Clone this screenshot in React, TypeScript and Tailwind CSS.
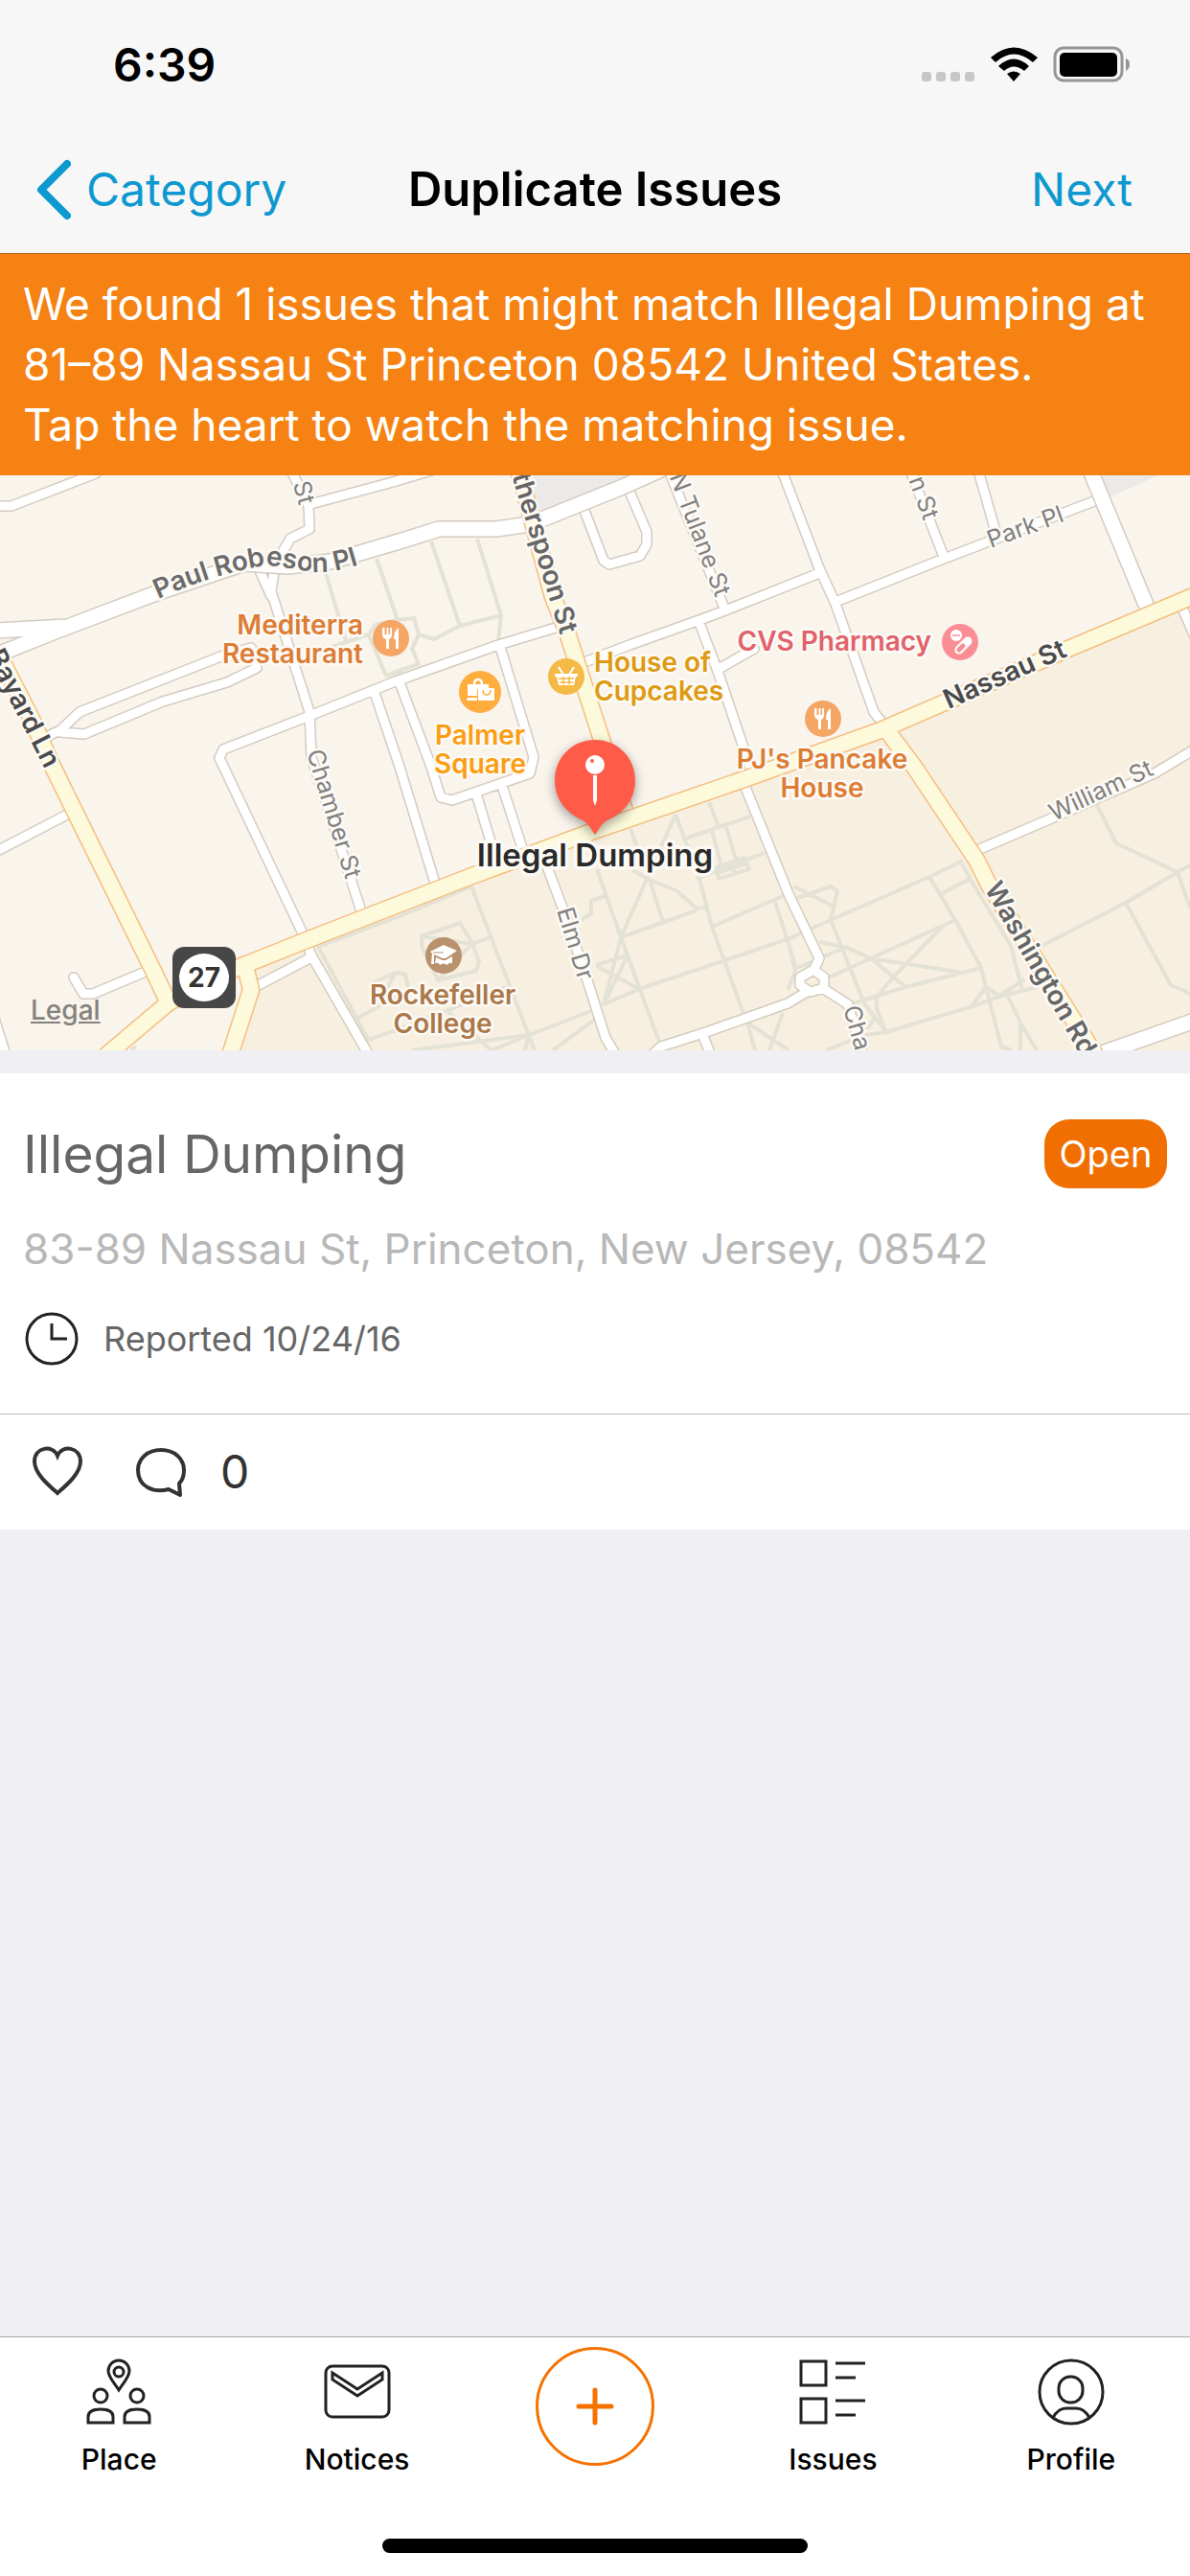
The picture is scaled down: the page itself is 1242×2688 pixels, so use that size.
import { useState, type ReactNode } from "react";

type Tab = {
  label: string;
  icon: ReactNode;
};

const CASING = "#d5cbc0";
const HIGHWAY_CASING = "#f6be80";

const FOOTPATHS = [
  "M340 102L362 176M393 87L415 151L432 149L437 166L453 171L480 157L523 146",
  "M347 179L385 166L392 156L415 151M450 69L480 157M498 66L523 146L520 174",
  "M437 166L430 181L437 197L410 206M385 167L403 209L420 204",
  "M385 590L332 492L420 459L492 429L558 600",
  "M372 567L413 544M385 589L420 576M388 530L413 519L402 538",
  "M440 481L480 467L492 487L500 507L497 517L457 527L440 491Z",
  "M440 481L492 489L513 482M457 527L492 489M410 521L417 519L423 521L427 537",
  "M430 600L552 584L617 559M577 600L623 566M548 600L552 584M467 559L513 600L552 584M410 581L533 532",
  "M658 369L667 394M623 411L648 482L688 591M705 354L648 482L630 552M705 354L730 421L743 471L777 564",
  "M660 412L678 422L707 434L727 452L737 451M678 422L692 466M648 482L727 454",
  "M623 512L667 536M622 511L655 501L630 552L667 536L757 506L830 481",
  "M632 439L617 444L617 457L607 464M743 471L817 439M808 442L830 511",
  "M715 379L783 356M740 341L750 367M743 371L753 407M758 367L768 401M727 421L798 394",
  "M748 409L777 399L782 411L750 421ZM749 415L779 405M763 404L767 416",
  "M780 571L823 600M780 571L788 600M817 561L803 600",
  "M822 484L867 464L970 419L1005 402M829 429L872 451M832 441L867 429L874 434L867 464L879 494L902 551L925 581",
  "M855 487L882 492L909 504L945 534M909 504L1005 519M865 524L909 504L997 464",
  "M985 469L932 524L915 544L915 557L925 581M970 419L997 464L1024 514L1029 534L1045 596L1056 600",
  "M890 551L945 534L1024 514M862 600L902 584L925 581L1015 554L1042 544L1082 534",
  "M1029 534L1044 544M1029 534L1014 554M1042 544L1069 526M1052 544L1065 571L1082 600M1065 571V600",
  "M1004 406L1022 437L1055 491L1067 537M982 437L1012 421",
  "M1085 492L1175 446L1229 414L1242 407M1145 344L1165 384L1229 414L1242 451M1175 446L1222 532L1239 539L1242 542",
  "M822 484L830 517L822 537M832 514L879 494M902 551L913 566L905 578M137 600L142 596",
];

const STREETS = [
  "M-5 32H12L100 -2",
  "M304 -5L322 32L323 56L303 66L287 94L283 121L323 247L325 294L377 455",
  "M324 30L410 7L450 -5",
  "M270 97L283 126",
  "M50 272L63 266L83 247L233 188L262 180L268 201L237 216L170 236L88 270L63 268",
  "M580 159L520 177L410 216L323 251L233 286L229 295L315 476L325 501L385 605",
  "M390 224L417 304L453 422",
  "M417 216L450 304L460 336L472 339L553 311L557 294L522 179",
  "M497 332L515 392M525 327L546 392M566 395L587 451L613 527L632 587L643 605",
  "M-5 393L70 354M77 524L87 541H97L154 517M-8 560L6 605M266 534L323 504",
  "M607 29L630 89L636 93L668 84L675 72V59L655 12",
  "M698 -5L757 141M610 195L657 177L730 151L757 141L830 112L855 102",
  "M730 154L750 207L783 305M750 202L787 181",
  "M816 -5L855 97L872 134L912 247L924 262",
  "M872 132L985 87L1142 27M950 -5L985 85M1021 -5L1040 62",
  "M1232 134L1250 175M1018 392L1095 359L1205 311L1250 284",
  "M775 318L823 437L855 504L849 517",
  "M849 516L860 524V535L846 539L835 532V524ZM842 539L822 551L737 581L690 596L680 605M733 583L742 605",
  "M860 536L885 552L900 605",
];

const AVENUES = [
  "M-5 188L60 162L163 123L255 92L300 95L345 90L420 68L458 56H518L553 51L650 12L690 -6",
  "M-5 162L70 158",
  "M1138 -5L1199 142",
  "M1150 603L1250 568",
];

const HIGHWAYS = [
  "M110 606L175 551L215 527L315 487L410 450L490 419L617 372L777 317L919 266L1115 181L1250 124",
  "M-4 182L33 254L55 304L160 517L178 555",
  "M255 508L262 537L240 605",
  "M541 -6L577 127L592 164L628 276L652 350",
  "M927 268L954 304L1019 401L1032 427L1122 571L1144 606",
];

function Roads({ lines, outer, inner }: { lines: string[]; outer: number; inner: number }) {
  const d = lines.join("");
  return (
    <g fill="none" strokeLinejoin="round" strokeLinecap="round">
      <path d={d} stroke={CASING} strokeWidth={outer} />
      <path d={d} stroke="#fff" strokeWidth={inner} />
    </g>
  );
}

function StreetName({
  x,
  y,
  angle,
  anchor = "start",
  tone = "#808080",
  major = false,
  children,
}: {
  x: number;
  y: number;
  angle: number;
  anchor?: "start" | "end";
  tone?: string;
  major?: boolean;
  children: string;
}) {
  return (
    <text
      transform={`translate(${x} ${y}) rotate(${angle})`}
      textAnchor={anchor}
      fill={tone}
      fontWeight={major ? 600 : 400}
      fontSize={major ? 28 : 25}
    >
      {children}
    </text>
  );
}

function PlaceName({
  x,
  y,
  color,
  anchor = "middle",
  lines,
}: {
  x: number;
  y: number;
  color: string;
  anchor?: "start" | "middle" | "end";
  lines: string[];
}) {
  return (
    <text textAnchor={anchor} fill={color} fontWeight={600} fontSize={28}>
      {lines.map((line, i) => (
        <tspan key={line} x={x} y={y + i * 30}>
          {line}
        </tspan>
      ))}
    </text>
  );
}

function ForkKnife({ x, y }: { x: number; y: number }) {
  return (
    <g transform={`translate(${x} ${y})`}>
      <circle r="19" fill="#f5a564" />
      <path
        d="M-9 -11V-4Q-9 0 -5 1V11H-2V1Q1 0 1 -4V-11H-1V-4H-2.500V-11H-4.500V-4H-6.500V-11ZM8 -11Q3 -8 3 1H5V11H8Z"
        fill="#fff"
      />
    </g>
  );
}

function MapView() {
  return (
    <section aria-label="Map" className="relative bg-[#f9f4ec]">
      <svg
        viewBox="0 0 1242 600"
        className="block h-auto w-full"
        fontFamily="Inter, 'Liberation Sans', sans-serif"
        role="img"
        aria-label="Map of Princeton around Nassau St"
      >
        <rect width="1242" height="600" fill="#f9f4ec" />
        <path d="M257 512L490 419L919 266L1242 127V600H240L262 537Z" fill="#f7efe0" />
        <path d="M548 0H690L562 42ZM1148 0H1209L1160 22Z" fill="#ebeae8" />
        <path d={FOOTPATHS.join("")} fill="none" stroke="#e3e2d5" strokeWidth="4" strokeLinejoin="round" />

        <Roads lines={STREETS} outer={12} inner={9} />
        <Roads lines={AVENUES} outer={18} inner={15} />
        <g fill="none" strokeLinejoin="round">
          <path d={HIGHWAYS.join("")} stroke={HIGHWAY_CASING} strokeWidth="19" />
          <path d={HIGHWAYS.join("")} stroke="#fcfadb" strokeWidth="16" />
        </g>

        <g stroke="#fdfaf5" strokeWidth="5" strokeLinejoin="round" paintOrder="stroke">
          <path id="robeson" d="M165 129Q205 111 240 102T283 94T320 100T400 84" fill="none" stroke="none" />
          <text fill="#6b6b6b" fontWeight={600} fontSize={28}>
            <textPath href="#robeson">Paul Robeson Pl</textPath>
          </text>
          <StreetName x={47} y={307} angle={63} anchor="end" tone="#4a4a4a" major>Bayard Ln</StreetName>
          <StreetName x={585} y={167} angle={73} anchor="end" tone="#666" major>therspoon St</StreetName>
          <StreetName x={990} y={244} angle={-24} tone="#4a4a4a" major>Nassau St</StreetName>
          <StreetName x={1027} y={431} angle={60} tone="#666" major>Washington Rd</StreetName>
          <StreetName x={312} y={32} angle={75} anchor="end">St</StreetName>
          <StreetName x={747} y={128} angle={69} anchor="end">N Tulane St</StreetName>
          <StreetName x={964} y={48} angle={70} anchor="end">n St</StreetName>
          <StreetName x={1034} y={76} angle={-20}>Park Pl</StreetName>
          <StreetName x={1100} y={361} angle={-25}>William St</StreetName>
          <StreetName x={320} y={289} angle={73}>Chamber St</StreetName>
          <StreetName x={581} y={454} angle={73}>Elm Dr</StreetName>
          <StreetName x={880} y={556} angle={74}>Cha</StreetName>

          <PlaceName x={379} y={166} color="#dc7d35" anchor="end" lines={["Mediterra", "Restaurant"]} />
          <PlaceName x={501} y={281} color="#fb9d12" lines={["Palmer", "Square"]} />
          <PlaceName x={620} y={205} color="#dd9a13" anchor="start" lines={["House of", "Cupcakes"]} />
          <PlaceName x={972} y={183} color="#e0626c" anchor="end" lines={["CVS Pharmacy"]} />
          <PlaceName x={858} y={306} color="#dc7d35" lines={["PJ's Pancake", "House"]} />
          <PlaceName x={462} y={552} color="#ab784a" lines={["Rockefeller", "College"]} />
        </g>

        <ForkKnife x={408} y={170} />
        <ForkKnife x={859} y={254} />

        {/* shopping bags */}
        <g transform="translate(501 226)">
          <circle r="22" fill="#ffae3d" />
          <path d="M-13 -8H9V-4H0Q-3 -4 -3 -1V4H-13ZM-13 6H-3V9H-14Z" fill="#fff" />
          <path d="M-6 -8Q-6 -13 -2 -13T2 -8" fill="none" stroke="#fff" strokeWidth="2.500" />
          <rect x="-2" y="-4" width="17" height="13" rx="1" fill="#fff" />
          <path d="M3 -2Q3 3 7 3T11 -2" fill="none" stroke="#ffae3d" strokeWidth="1.500" />
        </g>

        {/* basket */}
        <g transform="translate(591 210)">
          <circle r="19" fill="#f5b945" />
          <path d="M-12 -3H12V0H10L8 9H-8L-10 0H-12Z" fill="#fff" />
          <path d="M-8 -10L-3 -2M8 -10L3 -2" stroke="#fff" strokeWidth="2" />
          <path d="M-8 2H8M-7 6H7M-3 0V8M3 0V8" stroke="#f5b945" strokeWidth="1.500" />
        </g>

        {/* pills */}
        <g transform="translate(1002 174)">
          <circle r="19" fill="#fb8e95" />
          <circle cx="-4" cy="-7" r="6" fill="#fff" />
          <path d="M-8 -7H0" stroke="#fb8e95" strokeWidth="1.500" />
          <path d="M-1 8L8 -1" stroke="#fff" strokeWidth="9" strokeLinecap="round" />
          <path d="M-1 8L3 4" stroke="#fb8e95" strokeWidth="5" strokeLinecap="round" />
        </g>

        {/* graduation cap */}
        <g transform="translate(463 501)">
          <circle r="19" fill="#b9926d" />
          <path d="M-14 -4L0 -11L14 -5L2 3H-1L-10 -1V9H-13L-12 -2ZM-8 2L-1 5H2L9 1V8Q5 7 4 10Q0 7 -4 10Q-5 7 -9 8Z" fill="#fff" />
          <path d="M-11 -3H0" stroke="#b9926d" strokeWidth="1" />
        </g>

        {/* route shield */}
        <rect x="180" y="492" width="66" height="64" rx="12" fill="#474747" />
        <ellipse cx="213" cy="524" rx="26" ry="25" fill="#fff" />
        <text x="213" y="534" textAnchor="middle" fontSize="28" fontWeight="700" fill="#333">
          27
        </text>

        {/* dropped pin */}
        <path
          d="M621 276C645 276 663 295 663 318C663 340 650 352 636 359C628 362 625 370 621 375C617 370 614 362 606 359C592 352 579 340 579 318C579 295 597 276 621 276Z"
          fill="#ff5b49"
          className="drop-shadow-[0_4px_6px_rgba(0,0,0,0.35)]"
        />
        <circle cx="621" cy="302" r="10" fill="#fff" />
        <circle cx="618" cy="298" r="2" fill="#ff5b49" />
        <path d="M619 313H623V339L621 345L619 339Z" fill="#fff" />
        <text
          x="621"
          y="408"
          textAnchor="middle"
          fontSize="33"
          fontWeight="600"
          fill="#2a2a2a"
          stroke="#fdfaf5"
          strokeWidth="7"
          strokeLinejoin="round"
          paintOrder="stroke"
        >
          Illegal Dumping
        </text>
      </svg>
      <a href="#legal" className="absolute bottom-6 left-8 text-[28px] leading-9 font-medium text-[#85827d] underline">
        Legal
      </a>
    </section>
  );
}

function StatusBar() {
  return (
    <div className="flex h-33 items-start justify-between pt-10 pr-[62px] pl-[118px]">
      <span className="text-[48px] leading-14 font-semibold">6:39</span>
      <svg width="220" height="40" viewBox="0 0 220 40" className="mt-2" aria-hidden>
        <g fill="#c7c7c7">
          <rect x="2" y="27" width="10" height="10" rx="3" />
          <rect x="17" y="27" width="10" height="10" rx="3" />
          <rect x="32" y="27" width="10" height="10" rx="3" />
          <rect x="47" y="27" width="10" height="10" rx="3" />
        </g>
        <path d="M74 12Q98 -9 123 12L118 17Q98 0 79 17ZM82 21Q98 6 114 21L109 26Q98 17 88 26ZM91 29Q98 24 105 29L98 37Z" />
        <rect x="141" y="2" width="70" height="34" rx="9" fill="none" stroke="#959595" strokeWidth="3" />
        <rect x="146" y="7" width="60" height="25" rx="5" />
        <path d="M215 13Q219 14 219 19T215 26Z" fill="#959595" />
      </svg>
    </div>
  );
}

const tabs: Tab[] = [
  {
    label: "Place",
    icon: (
      <>
        <path d="M34 32C28 23 23 18 23 12A11 11 0 0 1 45 12C45 18 40 23 34 32Z" />
        <circle cx="34" cy="13" r="5" />
        <circle cx="15" cy="38" r="7" />
        <circle cx="53" cy="38" r="7" />
        <path d="M2 66V60Q2 52 15 52T28 60V66ZM40 66V60Q40 52 53 52T66 60V66Z" />
      </>
    ),
  },
  {
    label: "Notices",
    icon: (
      <>
        <rect x="1" y="7" width="66" height="53" rx="7" />
        <path d="M8 14L34 31L60 14V21L34 38L8 21Z" />
      </>
    ),
  },
  {
    label: "Issues",
    icon: (
      <path d="M1 2H27V27H1ZM1 41H27V66H1ZM37 4H68M37 19H58M37 43H68M37 58H58" />
    ),
  },
  {
    label: "Profile",
    icon: (
      <>
        <circle cx="34" cy="34" r="33" />
        <rect x="21" y="18" width="25" height="27" rx="12" />
        <path d="M15 61Q20 51 29 51H39Q48 51 53 61" />
      </>
    ),
  },
];

function TabButton({ tab }: { tab: Tab }) {
  return (
    <button type="button" className="flex flex-1 flex-col items-center pt-[23px]">
      <svg
        width="68"
        height="68"
        viewBox="0 0 68 68"
        fill="none"
        stroke="#222"
        strokeWidth="3"
        className="overflow-visible"
        aria-hidden
      >
        {tab.icon}
      </svg>
      <span className="mt-4 text-[30px] leading-10 font-medium">{tab.label}</span>
    </button>
  );
}

export default function App() {
  const [watching, setWatching] = useState(false);

  return (
    <div className="flex min-h-screen flex-col bg-[#efeff4] font-['Inter','Liberation_Sans',sans-serif] text-black">
      <header className="border-b border-[#b0651c] bg-[#f7f7f7]">
        <StatusBar />
        <nav className="grid h-33 grid-cols-[1fr_auto_1fr] items-center px-9">
          <button type="button" className="flex items-center gap-4 justify-self-start text-[48px] text-[#0d99cf]">
            <svg width="38" height="64" viewBox="0 0 38 64" aria-hidden>
              <path d="M34 5L7 32L34 59" fill="none" stroke="currentColor" strokeWidth="8" strokeLinecap="round" strokeLinejoin="round" />
            </svg>
            Category
          </button>
          <h1 className="text-[49px] font-semibold">Duplicate Issues</h1>
          <button type="button" className="mr-6 justify-self-end text-[48px] text-[#0d99cf]">
            Next
          </button>
        </nav>
      </header>

      <p className="bg-[#f58212] px-6 py-[21px] text-[46px] leading-[63px] text-white">
        We found 1 issues that might match Illegal Dumping at
        <br />
        81–89 Nassau St Princeton 08542 United States.
        <br />
        Tap the heart to watch the matching issue.
      </p>

      <main className="flex-1">
        <MapView />

        <article className="mt-6 bg-white">
          <div className="px-6 pt-12 pb-12">
            <div className="flex items-center justify-between">
              <h2 className="text-[55px] leading-[72px] text-[#666]">Illegal Dumping</h2>
              <span className="flex h-[72px] w-32 items-center justify-center rounded-[26px] bg-[#f06f00] text-[38px] text-white">
                Open
              </span>
            </div>
            <p className="mt-9 text-[44px] leading-[55px] text-[#b8b8b8]">83-89 Nassau St, Princeton, New Jersey, 08542</p>
            <div className="mt-9 flex items-center gap-6 text-[36px] leading-[60px] text-[#666]">
              <svg width="60" height="60" viewBox="0 0 60 60" fill="none" stroke="#222" strokeWidth="3" aria-hidden>
                <circle cx="30" cy="30" r="26" />
                <path d="M30 14V30H46" />
              </svg>
              Reported 10/24/16
            </div>
          </div>
          <div className="flex h-[121px] items-center gap-[50px] border-t border-[#b9b9b9] px-8 text-[48px] text-[#333]">
            <button
              type="button"
              aria-label="Watch issue"
              aria-pressed={watching}
              onClick={() => setWatching((value) => !value)}
            >
              <svg width="56" height="56" viewBox="0 0 56 56" fill={watching ? "currentColor" : "none"} stroke="currentColor" strokeWidth="4" aria-hidden>
                <path d="M28 50C20 43 4 30 4 17C4 2 23 -1 28 11C33 -1 52 2 52 17C52 30 36 43 28 50Z" />
              </svg>
            </button>
            <button type="button" className="flex items-center gap-9" aria-label="Comments: 0">
              <svg width="56" height="56" viewBox="0 0 56 56" fill="none" stroke="currentColor" strokeWidth="4" strokeLinejoin="round" aria-hidden>
                <path d="M49 40L50 52L38 46C23 50 6 44 6 26C6 14 16 5 30 5S54 14 54 26C54 32 52 37 49 40Z" />
              </svg>
              0
            </button>
          </div>
        </article>
      </main>

      <footer className="border-t border-[#a7a7aa] bg-white pb-6">
        <nav className="flex h-[210px] items-start">
          <TabButton tab={tabs[0]} />
          <TabButton tab={tabs[1]} />
          <div className="flex flex-1 justify-center pt-2.5">
            <button
              type="button"
              aria-label="Report issue"
              className="flex size-[124px] items-center justify-center rounded-full border-3 border-[#f57200] text-[#f57200]"
            >
              <svg width="40" height="40" viewBox="0 0 40 40" aria-hidden>
                <path d="M20 3V37M3 20H37" stroke="currentColor" strokeWidth="5" strokeLinecap="round" />
              </svg>
            </button>
          </div>
          <TabButton tab={tabs[2]} />
          <TabButton tab={tabs[3]} />
        </nav>
        <div className="mx-auto h-[15px] w-[444px] rounded-full bg-black" />
      </footer>
    </div>
  );
}
